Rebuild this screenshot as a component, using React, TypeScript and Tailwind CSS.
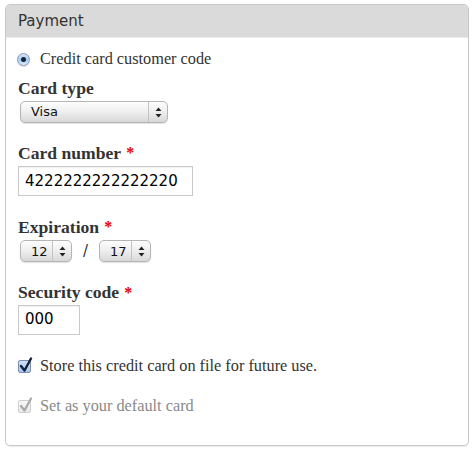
import React from 'react'

const serif = "font-['Liberation_Serif',Georgia,serif]"
const sans = "font-['DejaVu_Sans',Verdana,sans-serif]"

function Arrows() {
  return (
    <svg width="7" height="11" viewBox="0 0 7 11">
      <path d="M3.5 0.5 L6.5 4 L0.5 4 Z" fill="#222" />
      <path d="M3.5 10.5 L6.5 7 L0.5 7 Z" fill="#222" />
    </svg>
  )
}

function Select({ value, width }: { value: string; width: string }) {
  return (
    <div
      className={`flex h-[22px] ${width} items-stretch rounded-[5px] border border-[#b5b5b5] bg-gradient-to-b from-[#fdfdfd] via-[#eeeeee] to-[#d8d8d8] shadow-[0_1px_1px_rgba(0,0,0,0.12)]`}
    >
      <div className={`flex flex-1 items-center pl-[10px] ${sans} text-[13px] text-[#111]`}>
        {value}
      </div>
      <div className="flex w-[19px] items-center justify-center border-l border-[#c4c4c4]">
        <Arrows />
      </div>
    </div>
  )
}

function Label({ children, required }: { children: React.ReactNode; required?: boolean }) {
  return (
    <div className={`flex h-[20px] items-center ${serif} text-[17.6px] font-bold text-[#333]`}>
      {children}
      {required && <span className="ml-[5px] text-[#e00] text-[16px]">*</span>}
    </div>
  )
}

function Input({ value, width }: { value: string; width: string }) {
  return (
    <div className={`flex h-[30px] ${width} items-center border border-[#c9c9c9] bg-white pl-[6px] ${sans} text-[15px] text-black shadow-[inset_0_1px_1px_rgba(0,0,0,0.06)]`}>
      {value}
    </div>
  )
}

export default function App() {
  return (
    <div className="bg-white pl-[5px] pt-[4px] w-[474px] h-[451px]">
      <div className="w-[464px] h-[442px] rounded-[5px] border border-[#c8c8c8] overflow-hidden shadow-[0_1px_1px_rgba(0,0,0,0.08)]">
        {/* Header */}
        <div className={`flex h-[33px] items-center bg-[#dadada] border-b border-[#ececec] pl-[12px] ${sans} text-[15px] text-[#333]`}>
          Payment
        </div>

        <div className="px-[12px]">
          {/* Radio */}
          <div className="mt-[11px] flex h-[20px] items-center">
            <div className="ml-[-1px] flex h-[13px] w-[13px] items-center justify-center rounded-full border border-[#8a9bb5] bg-gradient-to-b from-[#d4e6fb] via-[#a9cdf5] to-[#d6eafc] shadow-[0_1px_1px_rgba(0,0,0,0.15)]">
              <div className="h-[5px] w-[5px] rounded-full bg-[#1a2535]" />
            </div>
            <span className={`ml-[10px] ${serif} text-[16.3px] text-[#333]`}>Credit card customer code</span>
          </div>

          {/* Card type */}
          <div className="mt-[9px]"><Label>Card type</Label></div>
          <div className="mt-[3px] ml-[2px]"><Select value="Visa" width="w-[148px]" /></div>

          {/* Card number */}
          <div className="mt-[20px]"><Label required>Card number</Label></div>
          <div className="mt-[3px]"><Input value="4222222222222220" width="w-[175px]" /></div>

          {/* Expiration */}
          <div className="mt-[21px]"><Label required>Expiration</Label></div>
          <div className="mt-[3px] ml-[2px] flex items-center">
            <Select value="12" width="w-[52px]" />
            <span className={`mx-[11px] ${sans} text-[15px] text-[#333]`}>/</span>
            <Select value="17" width="w-[52px]" />
          </div>

          {/* Security code */}
          <div className="mt-[20px]"><Label required>Security code</Label></div>
          <div className="mt-[2px]"><Input value="000" width="w-[62px]" /></div>

          {/* Store checkbox */}
          <div className="mt-[22px] flex h-[20px] items-center">
            <div className="relative h-[13px] w-[13px] rounded-[2px] border border-[#7d8fae] bg-gradient-to-b from-[#cfe2f8] to-[#a8c8ee]">
              <svg className="absolute left-[0px] top-[-4px]" width="14" height="16" viewBox="0 0 14 16">
                <path d="M2 9 L5.5 13.5 L12 1.5" stroke="#13223d" strokeWidth="2.4" fill="none" strokeLinecap="round" strokeLinejoin="round" />
              </svg>
            </div>
            <span className={`ml-[9px] ${serif} text-[16.3px] text-[#333]`}>Store this credit card on file for future use.</span>
          </div>

          {/* Default card */}
          <div className="mt-[20px] flex h-[20px] items-center">
            <div className="relative h-[13px] w-[13px] rounded-[2px] border border-[#cfcfcf] bg-gradient-to-b from-[#f8f8f8] to-[#e8e8e8]">
              <svg className="absolute left-[0px] top-[-4px]" width="14" height="16" viewBox="0 0 14 16">
                <path d="M2 9 L5.5 13.5 L12 1.5" stroke="#a8a8a8" strokeWidth="2.2" fill="none" strokeLinecap="round" strokeLinejoin="round" />
              </svg>
            </div>
            <span className={`ml-[9px] ${serif} text-[16.3px] text-[#8a8a8a]`}>Set as your default card</span>
          </div>
        </div>
      </div>
    </div>
  )
}
